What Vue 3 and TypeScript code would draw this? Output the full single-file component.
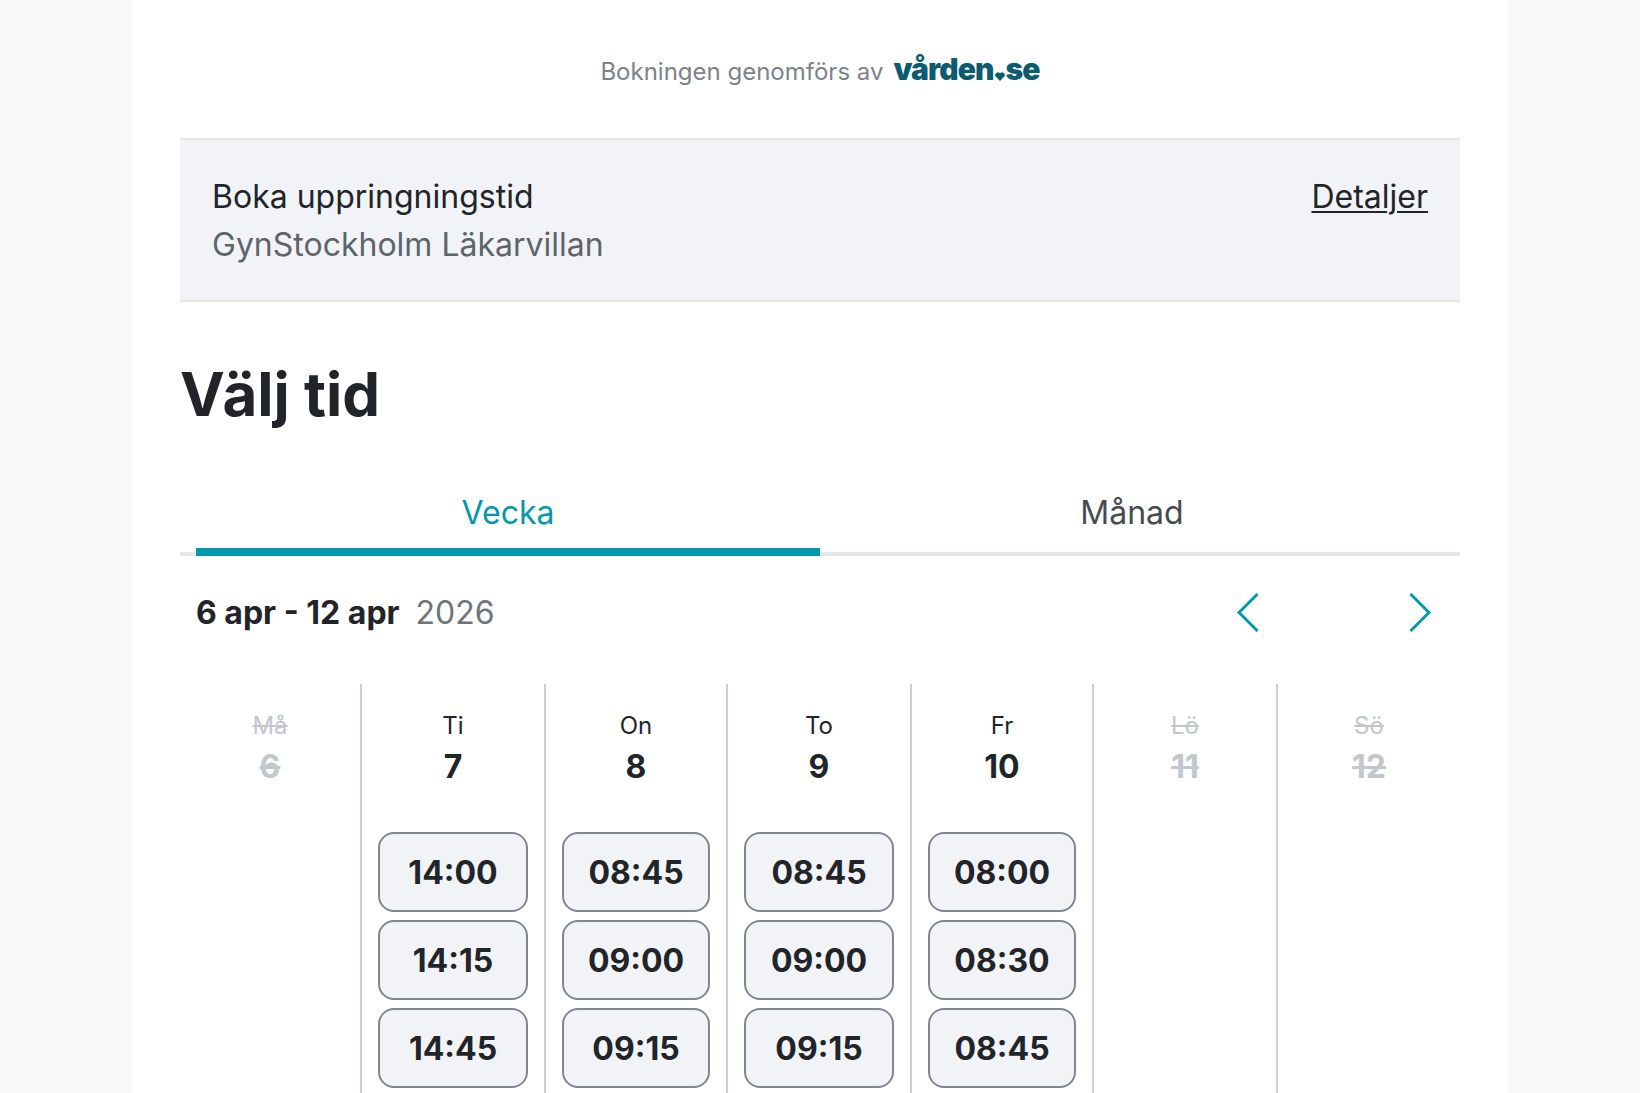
<script setup lang="ts">
interface Day { label: string; num: number; off: boolean; times: string[] }
const days: Day[] = [
  { label: 'Må', num: 6, off: true, times: [] },
  { label: 'Ti', num: 7, off: false, times: ['14:00', '14:15', '14:45'] },
  { label: 'On', num: 8, off: false, times: ['08:45', '09:00', '09:15'] },
  { label: 'To', num: 9, off: false, times: ['08:45', '09:00', '09:15'] },
  { label: 'Fr', num: 10, off: false, times: ['08:00', '08:30', '08:45'] },
  { label: 'Lö', num: 11, off: true, times: [] },
  { label: 'Sö', num: 12, off: true, times: [] },
]
</script>

<template>
  <div class="page">
    <main class="card">
      <header class="brand">
        <span class="by">Bokningen genomförs av</span>
        <span class="logo">vården<svg class="dot" viewBox="0 0 10 9" width="10" height="9"><path d="M5 9 L.7 4.6 A2.5 2.5 0 0 1 5 1.6 A2.5 2.5 0 0 1 9.3 4.6 Z" fill="#0b5c70" /></svg>se</span>
      </header>

      <section class="panel">
        <div class="panel-text">
          <div class="panel-title">Boka uppringningstid</div>
          <div class="panel-sub">GynStockholm Läkarvillan</div>
        </div>
        <a class="details">Detaljer</a>
      </section>

      <h1 class="heading">Välj tid</h1>

      <nav class="tabs">
        <div class="tab active">Vecka</div>
        <div class="tab">Månad</div>
      </nav>

      <div class="range">
        <div><strong>6 apr - 12 apr</strong><span class="year">2026</span></div>
        <div class="arrows">
          <svg viewBox="0 0 22 40" width="22" height="40" fill="none" stroke="#0299aa" stroke-width="3"><path d="M20.5 1 L2 19.5 L20.5 38" /></svg>
          <svg viewBox="0 0 22 40" width="22" height="40" fill="none" stroke="#0299aa" stroke-width="3"><path d="M1.5 1 L20 19.5 L1.5 38" /></svg>
        </div>
      </div>

      <div class="week">
        <div v-for="d in days" :key="d.num" class="col">
          <div class="day" :class="{ off: d.off }">
            <div class="day-label">{{ d.label }}</div>
            <div class="day-num">{{ d.num }}</div>
          </div>
          <div class="slots">
            <button v-for="t in d.times" :key="t" class="slot" type="button">{{ t }}</button>
          </div>
        </div>
      </div>
    </main>
  </div>
</template>

<style>
html, body { margin: 0; padding: 0; }
</style>

<style scoped>
.page {
  height: 1093px;
  overflow: hidden;
  background: #f8f9fb;
  display: flex;
  justify-content: center;
  font-family: Inter, "Liberation Sans", sans-serif;
  color: #212429;
}
.card {
  width: 1376px;
  box-sizing: border-box;
  padding: 0 48px;
  background: #fff;
  display: flex;
  flex-direction: column;
}
.brand {
  height: 138px;
  display: flex;
  align-items: flex-start;
  justify-content: center;
  gap: 10px;
  padding-top: 54px;
  box-sizing: border-box;
}
.by { font-size: 24px; line-height: 36px; color: #7b838d; }
.logo {
  font-weight: 900;
  font-size: 30px;
  line-height: 30px;
  letter-spacing: -0.9px;
  color: #0b5c70;
}
.dot { margin: 0 1px -1px 1px; }
.panel {
  box-sizing: border-box;
  height: 164px;
  background: #f1f3f7;
  border-top: 2px solid #e6e7ec;
  border-bottom: 2px solid #e6e7ec;
  padding: 33px 32px 0;
  display: flex;
  justify-content: space-between;
  font-size: 32px;
  line-height: 48px;
}
.panel-sub { color: #5d646c; }
.details { color: #212429; text-decoration: underline; text-underline-offset: 3px; text-decoration-thickness: 2px; }
.heading {
  margin: 56px 0 0;
  font-size: 60px;
  line-height: 72px;
  font-weight: 700;
}
.tabs {
  display: flex;
  margin-top: 59px;
  padding: 0 16px;
  border-bottom: 4px solid #e6e7ec;
}
.tab {
  flex: 1;
  text-align: center;
  font-size: 32px;
  line-height: 48px;
  padding-bottom: 19px;
  margin-bottom: -4px;
  color: #454b53;
}
.tab.active {
  color: #0299aa;
  border-bottom: 8px solid #0299aa;
  padding-bottom: 11px;
}
.range {
  display: flex;
  justify-content: space-between;
  align-items: center;
  height: 96px;
  margin-top: 9px;
  padding: 0 28px 0 16px;
  font-size: 32px;
  line-height: 48px;
}
.range strong { font-weight: 700; }
.year { color: #6c747d; margin-left: 16px; }
.arrows { display: flex; gap: 150px; margin-right: 1px; }
.week {
  display: grid;
  grid-template-columns: 180px 184px 182px 184px 182px 184px 184px;
  margin-top: 23px;
  flex: 1;
}
.col {
  box-sizing: border-box;
  border-left: 2px solid #ccd0d6;
  padding: 0 16px;
}
.col:first-child { border-left: 0; }
.day { text-align: center; padding-top: 26px; height: 148px; box-sizing: border-box; }
.day-label { font-size: 24px; line-height: 32px; }
.day-num { font-size: 32px; line-height: 48px; font-weight: 700; margin-top: 1px; }
.day.off { color: #c2c7ce; }
.day.off div { text-decoration: line-through; }
.slots { display: flex; flex-direction: column; gap: 8px; }
.slot {
  box-sizing: border-box;
  width: 100%;
  height: 80px;
  border: 2px solid #7f8791;
  border-radius: 16px;
  background: #f1f3f7;
  font-family: inherit;
  font-size: 32px;
  font-weight: 700;
  color: #212429;
  padding: 0;
}
</style>
